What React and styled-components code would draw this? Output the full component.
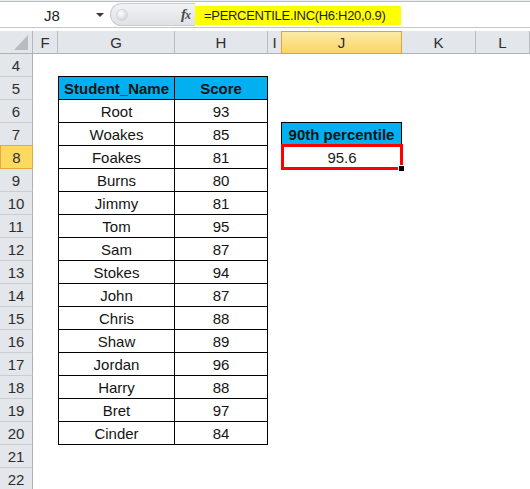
import { Fragment } from "react";
import styled, { createGlobalStyle, css } from "styled-components";

const GlobalStyle = createGlobalStyle`
  html, body {
    margin: 0;
    padding: 0;
    background: #ffffff;
    overflow: hidden;
  }
  body {
    font-family: "Liberation Sans", Arial, sans-serif;
  }
`;

const Page = styled.div`
  width: 530px;
  height: 489px;
  overflow: hidden;
  background: #fff;
`;

/* ---------- formula bar ---------- */

const FormulaBar = styled.div`
  display: flex;
  align-items: stretch;
  height: 31px;
  box-sizing: border-box;
  background: #fff;
  border-top: 1px solid #eceef0;
  box-shadow: inset 0 1px 0 #babdc1;
  padding: 2px 0 4px;
  position: relative;

  &::after {
    content: "";
    position: absolute;
    left: 0;
    right: 0;
    bottom: 3px;
    height: 1px;
    background: #c3c6ca;
  }
`;

const NameBox = styled.div`
  width: 110px;
  display: flex;
  align-items: center;
  background: #fff;
  font-size: 15px;
  color: #1e1e1e;

  span {
    flex: 1;
    text-align: center;
    padding-left: 8px;
  }
`;

const Arrow = styled.i`
  width: 0;
  height: 0;
  margin-right: 6px;
  border-left: 4px solid transparent;
  border-right: 4px solid transparent;
  border-top: 4px solid #3a3a3a;
`;

const Splitter = styled.div`
  width: 85px;
  display: flex;
  align-items: center;
  justify-content: space-between;
  box-sizing: border-box;
  padding: 0 5px 0 6px;
  margin-bottom: 1px;
  border-radius: 12px 0 0 12px;
  border: 1px solid #c9ccd1;
  border-right: 0;
  background: linear-gradient(#f1f2f4, #dfe2e6);
`;

const Knob = styled.span`
  width: 10px;
  height: 10px;
  border-radius: 50%;
  background: radial-gradient(circle at 40% 35%, #ffffff, #c3c6ca);
  box-shadow: 0 0 0 1px #d2d5d9;
`;

const Fx = styled.span`
  font-family: "Liberation Serif", "Times New Roman", serif;
  font-style: italic;
  font-weight: bold;
  font-size: 15px;
  color: #4a4a4a;
  letter-spacing: -1px;

  small {
    font-size: 12px;
  }
`;

const FormulaInput = styled.div`
  flex: 1;
  display: flex;
  align-items: center;
  background: #fff;
`;

const Highlight = styled.span`
  display: inline-block;
  height: 19px;
  line-height: 20px;
  padding: 0 15px 0 9px;
  background: #ffff00;
  font-size: 13px;
  letter-spacing: -0.3px;
  color: #1e1e1e;
`;

/* ---------- sheet ---------- */

const Sheet = styled.div`
  display: grid;
  grid-template-columns: 33px 25px 117px 93px 14px 120px 74px 1fr;
  grid-auto-rows: 23px;
  font-size: 15px;
`;

const headerBase = css`
  box-sizing: border-box;
  display: flex;
  align-items: center;
  justify-content: center;
  background: #e3e6ea;
  color: #2e2e2e;
`;

const Corner = styled.div`
  ${headerBase};
  position: relative;
  border-right: 1px solid #b4b8bd;
  border-bottom: 1px solid #aeb2b8;

  &::after {
    content: "";
    position: absolute;
    right: 4px;
    bottom: 3px;
    width: 14px;
    height: 15px;
    background: #b9bdc2;
    clip-path: polygon(100% 0, 100% 100%, 0 100%);
  }
`;

const ColHead = styled.div`
  ${headerBase};
  border-right: 1px solid #b9bdc2;
  border-bottom: 1px solid #aeb2b8;

  ${(p) =>
    p.$selected &&
    css`
      background: linear-gradient(#fdeaa8, #fbd466);
      border: 1px solid #e2a33e;
      margin-left: -1px;
    `}
`;

const RowHead = styled.div`
  ${headerBase};
  grid-column: 1;
  grid-row: ${(p) => p.$row};
  border-right: 1px solid #aeb2b8;
  border-bottom: 1px solid #c9cdd2;
  padding-top: 1px;

  ${(p) =>
    p.$selected &&
    css`
      background: #fed962;
      border: 1px solid #e4a83d;
      margin-top: -1px;
    `}
`;

const DataTable = styled.div`
  grid-column: 3 / span 2;
  grid-row: 3 / span 16;
  align-self: start;
  margin-top: -1px;
  display: grid;
  grid-template-columns: 116px 93px;
  grid-auto-rows: 23px;
  border-top: 1px solid #000;
  border-left: 1px solid #000;
`;

const TableCell = styled.div`
  box-sizing: border-box;
  border-right: 1px solid #000;
  border-bottom: 1px solid #000;
  display: flex;
  align-items: center;
  justify-content: center;
  padding-top: 1px;
  color: #141414;
  background: ${(p) => (p.$head ? "#00b0f0" : "#fff")};
  font-weight: ${(p) => (p.$head ? "bold" : "normal")};
`;

const PercentileHead = styled(TableCell)`
  grid-column: 6;
  grid-row: 5;
  margin: -1px 0 0 -1px;
  border: 1px solid #000;
`;

const ResultCell = styled.div`
  grid-column: 6;
  grid-row: 6;
  margin: -2px -1px -1px -1px;
  position: relative;
  box-sizing: border-box;
  border: 3px solid #ff0000;
  display: flex;
  align-items: center;
  justify-content: center;
  color: #1a1a1a;
  background: #fff;
`;

const FillHandle = styled.span`
  position: absolute;
  right: -4px;
  bottom: -4px;
  width: 5px;
  height: 5px;
  background: #000;
  border-left: 1px solid #fff;
  border-top: 1px solid #fff;
`;

const columns = ["F", "G", "H", "I", "J", "K", "L"];
const rows = Array.from({ length: 19 }, (_, i) => i + 4);

const students = [
  ["Root", 93],
  ["Woakes", 85],
  ["Foakes", 81],
  ["Burns", 80],
  ["Jimmy", 81],
  ["Tom", 95],
  ["Sam", 87],
  ["Stokes", 94],
  ["John", 87],
  ["Chris", 88],
  ["Shaw", 89],
  ["Jordan", 96],
  ["Harry", 88],
  ["Bret", 97],
  ["Cinder", 84],
];

export default function App() {
  return (
    <Page>
      <GlobalStyle />
      <FormulaBar>
        <NameBox>
          <span>J8</span>
          <Arrow />
        </NameBox>
        <Splitter>
          <Knob />
          <Fx>
            f<small>x</small>
          </Fx>
        </Splitter>
        <FormulaInput>
          <Highlight>=PERCENTILE.INC(H6:H20,0.9)</Highlight>
        </FormulaInput>
      </FormulaBar>

      <Sheet>
        <Corner />
        {columns.map((c) => (
          <ColHead key={c} $selected={c === "J"}>
            {c}
          </ColHead>
        ))}
        {rows.map((r) => (
          <RowHead key={r} $row={r - 2} $selected={r === 8}>
            {r}
          </RowHead>
        ))}

        <DataTable>
          <TableCell $head>Student_Name</TableCell>
          <TableCell $head>Score</TableCell>
          {students.map(([name, score]) => (
            <Fragment key={name}>
              <TableCell>{name}</TableCell>
              <TableCell>{score}</TableCell>
            </Fragment>
          ))}
        </DataTable>

        <PercentileHead $head>90th percentile</PercentileHead>
        <ResultCell>
          95.6
          <FillHandle />
        </ResultCell>
      </Sheet>
    </Page>
  );
}
